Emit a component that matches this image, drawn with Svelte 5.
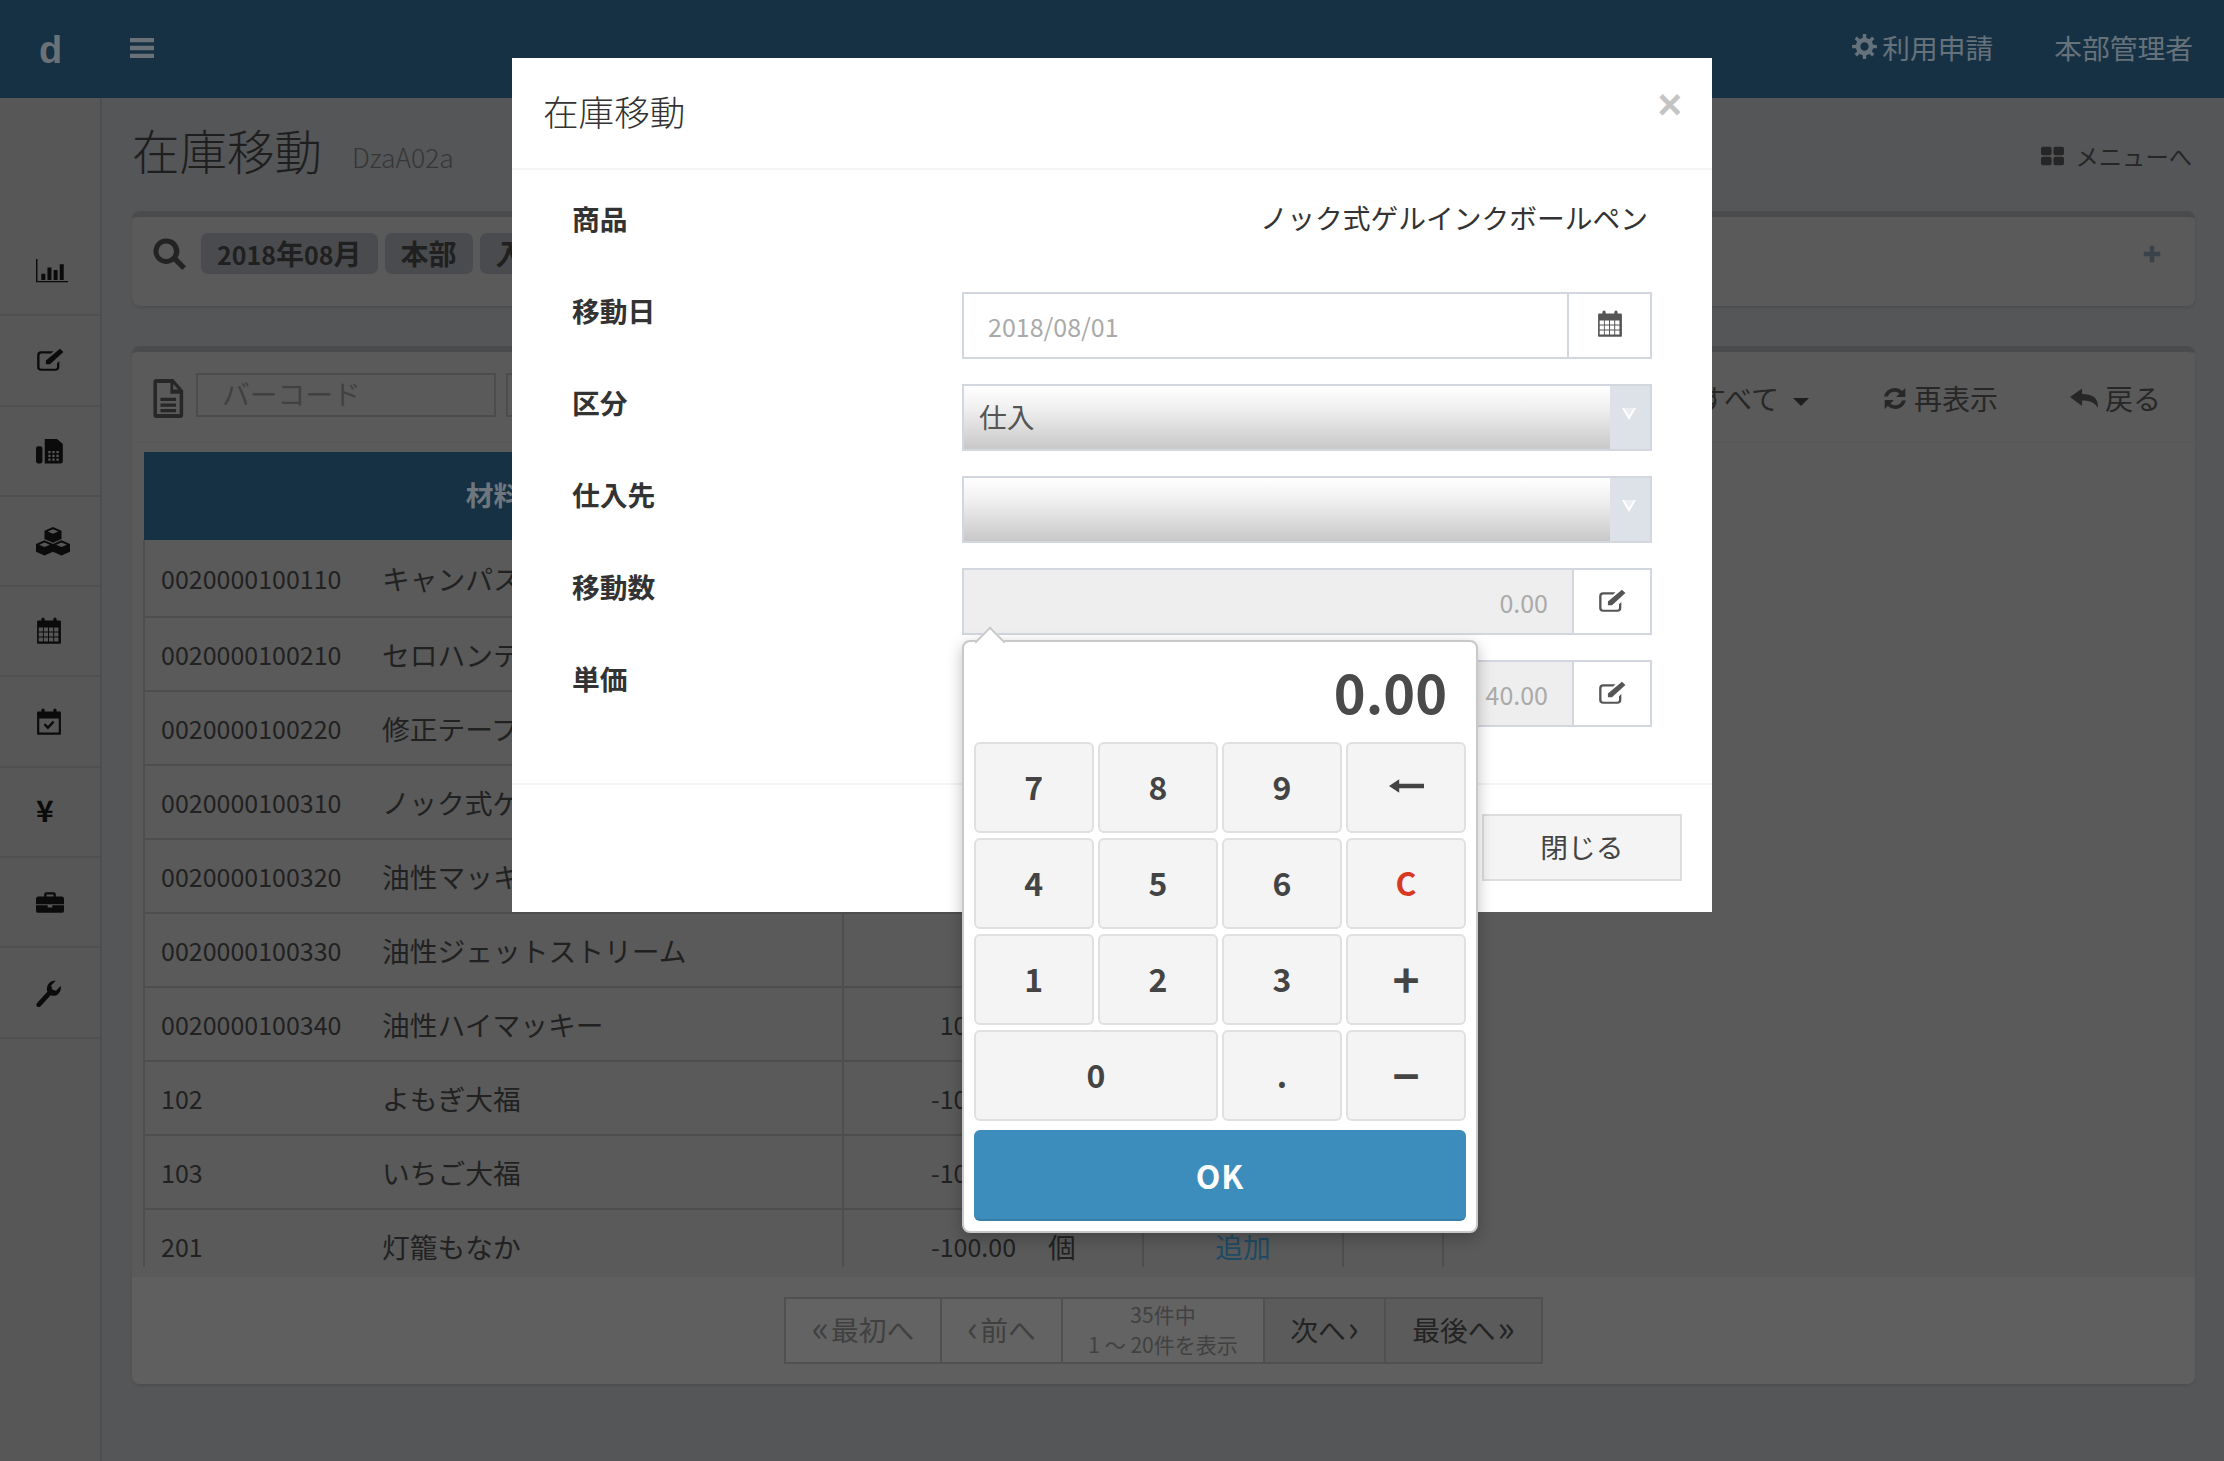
<script>
  const rows = [
    { code: '0020000100110', name: 'キャンパスノート', qty: '-100.00' },
    { code: '0020000100210', name: 'セロハンテープ', qty: '-100.00' },
    { code: '0020000100220', name: '修正テープ', qty: '-100.00' },
    { code: '0020000100310', name: 'ノック式ゲルインクボールペン', qty: '0.00' },
    { code: '0020000100320', name: '油性マッキー', qty: '0.00' },
    { code: '0020000100330', name: '油性ジェットストリーム', qty: '0.00' },
    { code: '0020000100340', name: '油性ハイマッキー', qty: '100.00' },
    { code: '102', name: 'よもぎ大福', qty: '-100.00' },
    { code: '103', name: 'いちご大福', qty: '-100.00' },
    { code: '201', name: '灯籠もなか', qty: '-100.00' }
  ]

  const keys = [
    { label: '7' }, { label: '8' }, { label: '9' }, { label: 'back' },
    { label: '4' }, { label: '5' }, { label: '6' }, { label: 'C', cls: 'red' },
    { label: '1' }, { label: '2' }, { label: '3' }, { label: '+', cls: 'op' },
    { label: '0', cls: 'wide' }, { label: '.' }, { label: '−', cls: 'op' }
  ]

  // calendar grid holes
  let calGrid = ''
  for (const y of [9, 13.3, 17.6]) {
    for (const x of [2.5, 7.2, 12, 16.8]) calGrid += `M${x} ${y}h3.9v3.4h-3.9z`
  }
  const calBody = 'M2 3h3V2a1.500 1.500 0 0 1 3 0v1h8V2a1.500 1.500 0 0 1 3 0v1h3a1 1 0 0 1 1 1v18a1 1 0 0 1-1 1H2a1 1 0 0 1-1-1V4a1 1 0 0 1 1-1z'

  let faxGrid = ''
  for (const y of [12, 15.5, 19]) {
    for (const x of [10.5, 14, 17.5]) faxGrid += `M${x} ${y}h2v2h-2z`
  }

  function gearPath() {
    let d = ''
    const n = 8
    for (let i = 0; i < n; i++) {
      const a = (i / n) * Math.PI * 2
      const pts = [[-0.2, 8.5], [-0.13, 12], [0.13, 12], [0.2, 8.5]]
      for (const [o, r] of pts) {
        const x = 12 + Math.cos(a + o) * r
        const y = 12 + Math.sin(a + o) * r
        d += (d ? 'L' : 'M') + x.toFixed(2) + ' ' + y.toFixed(2)
      }
    }
    return d + 'zM12 8a4 4 0 1 0 0 8 4 4 0 0 0 0-8z'
  }

  const paths = {
    bars: 'M0 1h24v4.800H0zM0 9.600h24v4.800H0zM0 18.200h24V23H0z',
    chart: 'M0 1h1.100v21H24v1.200H0zM4 15h3v6H4zM8.600 9h3v12h-3zM13.200 11.500h3V21h-3zM17.800 6h3v15h-3z',
    edit: 'M4.500 4H15l-2 2H4.500A1.500 1.500 0 0 0 3 7.500v11A1.500 1.500 0 0 0 4.500 20h12a1.500 1.500 0 0 0 1.500-1.500V15l2-2v5.500a3.500 3.500 0 0 1-3.500 3.500h-12A3.500 3.500 0 0 1 1 18.500v-11A3.500 3.500 0 0 1 4.500 4zM20.500 1.500l3 3L12 16H8.500v-3.500z',
    fax: 'M0 9.500a2 2 0 0 1 2-2h1.500a2 2 0 0 1 2 2V21.500a2 2 0 0 1-2 2H2a2 2 0 0 1-2-2zM7.500 1H18l5 4.500V21.500a2 2 0 0 1-2 2H7.500z' + faxGrid,
    cubes: 'M12 0l6 3v7l-6 3-6-3V3zM12 1.800L8.200 3.700 12 5.600l3.800-1.900zM6 11l6 3v6.500l-6 3-6-3V14zM6 12.800L2.200 14.700 6 16.600l3.800-1.900zM18 11l6 3v6.500l-6 3-6-3V14zM18 12.800l-3.800 1.900 3.800 1.900 3.800-1.900z',
    calendar: calBody + calGrid,
    check: calBody + 'M3 9h18v12H3zM7 14.500L8.500 13l2.500 2.500 4.500-4.500 1.500 1.500-6 6z',
    briefcase: 'M9 3h6a2 2 0 0 1 2 2v2h5a2 2 0 0 1 2 2v5H0V9a2 2 0 0 1 2-2h5V5a2 2 0 0 1 2-2zM9 5v2h6V5zM0 15h10v2h4v-2h10v5a2 2 0 0 1-2 2H2a2 2 0 0 1-2-2z',
    wrench: 'M17 1.500a7 7 0 0 0-6.500 9.500L1 20.500a2.100 2.100 0 0 0 3 3L13.500 14a7 7 0 0 0 9.500-6.500c0-.7 0-1-.3-1.600L18.500 10 15 9l-1-3.500 4.200-4c-.3 0-.4 0-.7 0z',
    search: 'M10 1a9 9 0 1 0 5.300 16.300l6 6 2.700-2.700-6-6A9 9 0 0 0 10 1zM10 4.500a5.500 5.500 0 1 1 0 11 5.500 5.500 0 0 1 0-11z',
    file: 'M3 0h12l7 7v15a2 2 0 0 1-2 2H3a2 2 0 0 1-2-2V2a2 2 0 0 1 2-2zM3.500 2.500v19h16V9H13V2.500zM15 3v3.500h3.500zM6 11.500h11v2H6zM6 15h11v2H6zM6 18.500h11v2H6z',
    refresh: 'M21.500 2v8.500H13l3.200-3.200A6.500 6.500 0 0 0 5.500 10H2A10 10 0 0 1 18.700 4.800zM2.500 22v-8.500H11l-3.200 3.200A6.500 6.500 0 0 0 18.500 14H22a10 10 0 0 1-16.700 5.200z',
    reply: 'M10 2.500V8c8 0 14 3.500 13 14-2-5-6-7.500-13-7.500V20L0 11z',
    grid: 'M0 3a2 2 0 0 1 2-2h7a2 2 0 0 1 2 2v6a2 2 0 0 1-2 2H2a2 2 0 0 1-2-2zM13 3a2 2 0 0 1 2-2h7a2 2 0 0 1 2 2v6a2 2 0 0 1-2 2h-7a2 2 0 0 1-2-2zM0 15a2 2 0 0 1 2-2h7a2 2 0 0 1 2 2v6a2 2 0 0 1-2 2H2a2 2 0 0 1-2-2zM13 15a2 2 0 0 1 2-2h7a2 2 0 0 1 2 2v6a2 2 0 0 1-2 2h-7a2 2 0 0 1-2-2z',
    gear: gearPath(),
    plus: 'M9 1h6v8h8v6h-8v8H9v-8H1V9h8z',
    back: 'M0 12l7-9v6h17v6H7v6z'
  }

  const menu = [
    { icon: 'chart', cls: 'i-chart' },
    { icon: 'edit', cls: 'i-edit' },
    { icon: 'fax', cls: 'i-edit' },
    { icon: 'cubes', cls: 'i-cubes' },
    { icon: 'calendar', cls: 'i-cal' },
    { icon: 'check', cls: 'i-cal' },
    { yen: true },
    { icon: 'briefcase', cls: 'i-edit' },
    { icon: 'wrench', cls: 'i-cal' }
  ]
</script>

{#snippet icon(name, cls)}
  <svg class={cls} viewBox="0 0 24 24" preserveAspectRatio="none"><path fill="currentColor" fill-rule="evenodd" d={paths[name]} /></svg>
{/snippet}

<div class="page">
  <header class="topbar">
    <div class="logo">d</div>
    <div class="burger">{@render icon('bars', 'i-bars')}</div>
    <div class="top-right">
      <span class="top-link">{@render icon('gear', 'i-gear')}利用申請</span>
      <span class="top-link user">本部管理者</span>
    </div>
  </header>

  <div class="body">
    <aside class="sidebar">
      <ul>
        {#each menu as m}
          <li>
            {#if m.yen}
              <span class="yen">¥</span>
            {:else}
              {@render icon(m.icon, m.cls)}
            {/if}
          </li>
        {/each}
      </ul>
    </aside>

    <main class="content">
      <div class="title-row">
        <h1>在庫移動</h1>
        <small>DzaA02a</small>
        <span class="to-menu">{@render icon('grid', 'i-grid')}メニューへ</span>
      </div>

      <section class="box search-box">
        {@render icon('search', 'i-search')}
        <span class="tag"><span class="num">2018</span>年<span class="num">08</span>月</span>
        <span class="tag">本部</span>
        <span class="tag">入庫</span>
        <span class="plus">{@render icon('plus', 'i-plus')}</span>
      </section>

      <section class="box list-box">
        <div class="toolbar">
          {@render icon('file', 'i-file')}
          <div class="fake-input">バーコード</div>
          <div class="fake-input second"></div>
          <span class="tool all">すべて<i class="caret"></i></span>
          <span class="tool refresh">{@render icon('refresh', 'i-tool')}再表示</span>
          <span class="tool">{@render icon('reply', 'i-reply')}戻る</span>
        </div>

        <div class="table-wrap">
          <table>
            <colgroup>
              <col class="w-code" />
              <col class="w-name" />
              <col class="w-qty" />
              <col class="w-unit" />
              <col class="w-act" />
              <col class="w-x" />
              <col />
            </colgroup>
            <thead>
              <tr>
                <th colspan="2">材料</th>
                <th colspan="2">在庫数</th>
                <th>操作</th>
                <th></th>
                <th></th>
              </tr>
            </thead>
            <tbody>
              {#each rows as r}
                <tr>
                  <td class="code">{r.code}</td>
                  <td class="name">{r.name}</td>
                  <td class="qty">{r.qty}</td>
                  <td class="unit">個</td>
                  <td class="act">追加</td>
                  <td></td>
                  <td></td>
                </tr>
              {/each}
            </tbody>
          </table>
        </div>

        <div class="pager-row">
          <div class="pager">
            <span class="pg off pg1"><b>«</b>最初へ</span>
            <span class="pg off pg2"><b>‹</b>前へ</span>
            <span class="pg info pg3">35件中<br />1 ～ 20件を表示</span>
            <span class="pg pg2">次へ<b>›</b></span>
            <span class="pg pg4">最後へ<b>»</b></span>
          </div>
        </div>
      </section>
    </main>
  </div>

  <div class="modal">
    <div class="modal-head">
      <h2>在庫移動</h2>
      <span class="close">×</span>
    </div>
    <div class="modal-body">
      <div class="form-row first">
        <label>商品</label>
        <div class="static">ノック式ゲルインクボールペン</div>
      </div>
      <div class="form-row">
        <label>移動日</label>
        <div class="group">
          <div class="ctl date">2018/08/01</div>
          <div class="addon cal">{@render icon('calendar', 'i-addon-cal')}</div>
        </div>
      </div>
      <div class="form-row">
        <label>区分</label>
        <div class="group sel">
          <div class="sel-text">仕入</div>
          <div class="sel-arrow"><i></i></div>
        </div>
      </div>
      <div class="form-row">
        <label>仕入先</label>
        <div class="group sel">
          <div class="sel-text"></div>
          <div class="sel-arrow"><i></i></div>
        </div>
      </div>
      <div class="form-row">
        <label>移動数</label>
        <div class="group">
          <div class="ctl ro">0.00</div>
          <div class="addon">{@render icon('edit', 'i-addon')}</div>
        </div>
      </div>
      <div class="form-row">
        <label>単価</label>
        <div class="group">
          <div class="ctl ro">40.00</div>
          <div class="addon">{@render icon('edit', 'i-addon')}</div>
        </div>
      </div>
    </div>
    <div class="modal-foot">
      <button class="close-btn">閉じる</button>
    </div>
  </div>

  <div class="popover">
    <div class="display">0.00</div>
    <div class="keypad">
      {#each keys as k}
        <button class={'key ' + (k.cls || '')}>
          {#if k.label === 'back'}
            {@render icon('back', 'i-back')}
          {:else}
            {k.label}
          {/if}
        </button>
      {/each}
      <button class="ok">OK</button>
    </div>
  </div>
</div>

<style>
  :global(body) {
    margin: 0;
    background: #545658;
    font-family: "Noto Sans CJK JP", "Noto Sans", sans-serif;
  }
  .page {
    position: relative;
    width: 2224px;
    height: 1461px;
    overflow: hidden;
    color: #232323;
  }
  svg { display: block; }

  .topbar {
    height: 98px;
    background: #173144;
    display: flex;
    align-items: center;
    color: #66727b;
  }
  .logo {
    width: 130px;
    box-sizing: border-box;
    padding-left: 39px;
    font: bold 38px "Liberation Sans", sans-serif;
    color: #6b7277;
    margin-top: 2px;
  }
  .burger { color: #6b7277; margin-top: -3px; }
  .i-bars { width: 24px; height: 22px; }
  .top-right {
    margin-left: auto;
    display: flex;
    padding-right: 31px;
    font-size: 27.750px;
    gap: 61px;
    margin-top: -5px;
  }
  .top-link { display: flex; align-items: center; gap: 5px; }
  .i-gear { width: 25px; height: 25px; }

  .body { display: flex; height: 1363px; }
  .sidebar {
    width: 100px;
    background: #575758;
    border-right: 2px solid #4d4e50;
    padding-top: 128px;
    color: #0b0b0b;
  }
  .sidebar ul { list-style: none; margin: 0; padding: 0; }
  .sidebar li {
    height: 88.300px;
    border-bottom: 2px solid #4e4f50;
    display: flex;
    align-items: center;
    padding-left: 36px;
  }
  .i-chart { width: 32px; height: 25px; }
  .i-edit { width: 28px; height: 26px; }
  .i-cubes { width: 34px; height: 29px; }
  .i-cal { width: 26px; height: 28px; }
  .yen { font-weight: 700; font-size: 30px; line-height: 1; margin-top: -6px; }

  .content { flex: 1; padding: 0 29px 0 30px; }
  .title-row {
    height: 113px;
    display: flex;
    align-items: center;
    position: relative;
  }
  h1 {
    margin: -10px 0 0 0;
    font-size: 47.500px;
    font-weight: 300;
    color: #1e1e1e;
    line-height: 1;
  }
  small {
    margin: 3px 0 0 30px;
    font-size: 26.500px;
    font-weight: 300;
    color: #363636;
  }
  .to-menu {
    margin-left: auto;
    margin-right: 3px;
    margin-top: 3px;
    display: flex;
    align-items: center;
    gap: 12px;
    font-size: 23.300px;
    color: #262626;
  }
  .i-grid { width: 23px; height: 20px; }

  .box {
    background: #5a5a5a;
    border-top: 6px solid #4a4b4d;
    border-radius: 8px;
    box-shadow: 0 2px 2px #4e4f50;
  }
  .search-box {
    height: 89px;
    display: flex;
    align-items: center;
    padding: 0 20px;
    position: relative;
    margin-bottom: 40px;
  }
  .search-box > :global(.i-search) { width: 34px; height: 34px; color: #232323; margin-right: 15px; margin-top: -16px; }
  .tag {
    background: #4a4b4e;
    border-radius: 7px;
    height: 41px;
    line-height: 41px;
    padding: 0 16px;
    font-weight: 700;
    font-size: 28px;
    color: #202020;
    margin-right: 7px;
    margin-top: -16px;
  }
  .num { font-size: 25px; }
  .plus { margin-left: auto; margin-right: 14px; margin-top: -16px; color: #3a424a; }
  .i-plus { width: 18px; height: 18px; }

  .toolbar {
    height: 86px;
    border-bottom: 1px solid #565656;
    display: flex;
    align-items: center;
    padding: 0 34px 4px 20px;
    font-size: 27.750px;
    color: #272727;
  }
  .i-file { width: 34px; height: 39px; margin-right: 10px; margin-top: 6px; }
  .fake-input {
    width: 296px;
    height: 40px;
    border: 2px solid #4c4c4c;
    line-height: 36px;
    color: #414141;
    margin-right: 10px;
    text-indent: 24px;
  }
  .fake-input.second { width: 300px; }
  .tool { display: flex; align-items: center; gap: 6px; margin-top: 6px; font-size: 28px; }
  .all { margin-left: auto; gap: 14px; margin-right: 73px; }
  .refresh { margin-right: 72px; }
  .i-tool { width: 26px; height: 25px; }
  .i-reply { width: 29px; height: 24px; }
  .caret {
    width: 0;
    height: 0;
    border-left: 8px solid transparent;
    border-right: 8px solid transparent;
    border-top: 8px solid #1e1e1e;
    margin-top: 8px;
  }

  .table-wrap {
    margin: 9px 0 0 11px;
    height: 815px;
    width: 1301px;
    overflow: hidden;
  }
  table {
    border-collapse: collapse;
    table-layout: fixed;
    width: 1301px;
  }
  .w-code { width: 238px; }
  .w-name { width: 461px; }
  .w-qty { width: 173px; }
  .w-unit { width: 127px; }
  .w-act { width: 200px; }
  .w-x { width: 100px; }
  th {
    background: #173144;
    height: 84px;
    padding: 0 0 4px;
    font-size: 27.750px;
    color: #6e777d;
    font-weight: 700;
  }
  td {
    height: 72px;
    padding: 0;
    border-bottom: 2px solid #4e4e4e;
    font-size: 27.750px;
    color: #212121;
    white-space: nowrap;
  }
  tbody tr:first-child td { height: 76px; }
  td:nth-child(n + 4) { border-right: 2px solid #4e4e4e; }
  td.code {
    padding-left: 16px;
    font-size: 25px;
    border-left: 2px solid #4e4e4e;
  }
  td.name { border-right: 2px solid #4e4e4e; }
  td.qty { font-size: 25px; text-align: right; }
  td.unit { padding-left: 32px; }
  td.act { text-align: center; color: #1f4a63; }

  .pager-row {
    border-top: 2px solid #5f5f5f;
    margin-top: 10px;
    background: #5f5f5f;
    height: 105px;
    display: flex;
    justify-content: center;
    align-items: center;
    border-radius: 0 0 8px 8px;
  }
  .pager { display: flex; height: 67px; margin-bottom: 2px; border: 2px solid #505050; box-sizing: border-box; }
  .pg {
    display: flex;
    align-items: center;
    justify-content: center;
    font-size: 27.750px;
    color: #232323;
    background: #5b5b5b;
    border-right: 2px solid #505050;
    box-sizing: border-box;
    gap: 2px;
    padding-bottom: 3px;
  }
  .pg:last-child { border-right: 0; }
  .pg b { font-weight: 400; font-size: 36px; line-height: 1; margin-top: -6px; }
  .pg1 { width: 156px; }
  .pg2 { width: 121px; }
  .pg3 { width: 202px; }
  .pg4 { width: 155px; }
  .off { color: #404040; background: #636363; }
  .info {
    color: #414141;
    background: #636363;
    font-size: 21px;
    line-height: 30px;
    text-align: center;
    display: block;
    padding: 0;
  }

  .modal {
    position: absolute;
    left: 512px;
    top: 58px;
    width: 1200px;
    height: 854px;
    background: #fff;
    color: #333;
    display: flex;
    flex-direction: column;
  }
  .modal-head {
    height: 110px;
    border-bottom: 2px solid #f4f4f4;
    padding: 0 30px 0 31px;
    display: flex;
    align-items: center;
    justify-content: space-between;
    flex: none;
  }
  h2 {
    margin: -4px 0 0;
    font-size: 35.600px;
    font-weight: 300;
    color: #333;
    line-height: 1;
  }
  .close {
    font: 700 42px "Liberation Sans", sans-serif;
    color: #c4c4c4;
    margin-top: -16px;
    line-height: 1;
  }
  .modal-body {
    flex: 1;
    padding: 7px 60px 0;
    display: flex;
    flex-direction: column;
  }
  .form-row {
    height: 92px;
    display: flex;
    align-items: flex-start;
  }
  .first { margin-right: 4px; }
  label {
    width: 390px;
    font-weight: 700;
    font-size: 27.750px;
    line-height: 1;
    margin-top: 28px;
    color: #333;
  }
  .static {
    flex: 1;
    text-align: right;
    font-size: 27.750px;
    line-height: 1;
    margin-top: 27px;
    color: #333;
  }
  .group {
    width: 690px;
    height: 67px;
    margin-top: 23px;
    display: flex;
    border: 2px solid #d2d6de;
    box-sizing: border-box;
    margin-right: -20px;
  }
  .ctl {
    flex: 1;
    font-size: 25px;
    color: #aaa;
    display: flex;
    align-items: center;
    padding: 0 24px;
  }
  .ctl.ro { background: #eee; justify-content: flex-end; }
  .addon {
    width: 76px;
    flex: none;
    border-left: 2px solid #d2d6de;
    display: flex;
    align-items: center;
    justify-content: center;
    color: #555;
  }
  .addon.cal { width: 81px; }
  .i-addon { width: 28px; height: 26px; margin-top: -2px; }
  .i-addon-cal { width: 26px; height: 28px; margin-top: -4px; }
  .sel-text {
    flex: 1;
    background: linear-gradient(#fff 0%, #f0f0f0 35%, #c8c8c8 100%);
    padding-left: 15px;
    font-size: 27.750px;
    line-height: 60px;
    color: #555;
  }
  .sel-arrow {
    width: 40px;
    flex: none;
    background: #dde1e8;
    position: relative;
  }
  .sel-arrow i {
    position: absolute;
    left: 12px;
    top: 22px;
    border-left: 7px solid transparent;
    border-right: 7px solid transparent;
    border-top: 12px solid #fff;
  }
  .sel-arrow i::after {
    content: '';
    position: absolute;
    left: -5px;
    top: -12px;
    border-left: 5px solid transparent;
    border-right: 5px solid transparent;
    border-top: 8.500px solid #eceef2;
  }
  .modal-foot {
    height: 129px;
    flex: none;
    border-top: 2px solid #f4f4f4;
    display: flex;
    justify-content: flex-end;
    padding: 29px 30px 0 0;
    box-sizing: border-box;
  }
  .close-btn {
    width: 200px;
    height: 67px;
    border: 2px solid #ddd;
    background: #f4f4f4;
    color: #444;
    font: 27.750px "Noto Sans CJK JP", sans-serif;
    padding: 0 0 3px;
  }

  .popover {
    position: absolute;
    left: 962px;
    top: 640px;
    width: 516px;
    height: 593px;
    box-sizing: border-box;
    background: #fff;
    border: 2px solid #c8c8c8;
    border-radius: 8px;
    box-shadow: 0 5px 15px rgba(0, 0, 0, .25);
    padding: 0 10px;
  }
  .popover::before {
    content: '';
    position: absolute;
    left: 15px;
    top: -11px;
    width: 20px;
    height: 20px;
    background: #fff;
    border: 2px solid #c8c8c8;
    border-width: 2px 0 0 2px;
    transform: rotate(45deg);
    transform-origin: center;
  }
  .display {
    height: 100px;
    position: relative;
    text-align: right;
    font-size: 54px;
    font-weight: 700;
    line-height: 98px;
    color: #4a4a4a;
    padding-right: 19px;
  }
  .keypad {
    display: grid;
    grid-template-columns: repeat(4, 119.600px);
    grid-auto-rows: 91px;
    gap: 5px 4.500px;
  }
  .key {
    background: #f4f4f4;
    border: 2px solid #e0e0e0;
    border-radius: 6px;
    font: 700 32px "Noto Sans CJK JP", sans-serif;
    color: #444;
    padding: 0 0 4px;
    display: flex;
    align-items: center;
    justify-content: center;
  }
  .key.wide { grid-column: span 2; }
  .key.red { color: #d73925; }
  .key.op { font-size: 46px; }
  .i-back { width: 35px; height: 18px; color: #444; }
  .ok {
    grid-column: 1 / -1;
    margin-top: 4px;
    height: 91px;
    background: #3c8dbc;
    border: 0;
    border-bottom: 2px solid #367fa9;
    border-radius: 6px;
    color: #fff;
    font: 700 32px "Noto Sans CJK JP", sans-serif;
    letter-spacing: 1px;
  }
</style>
